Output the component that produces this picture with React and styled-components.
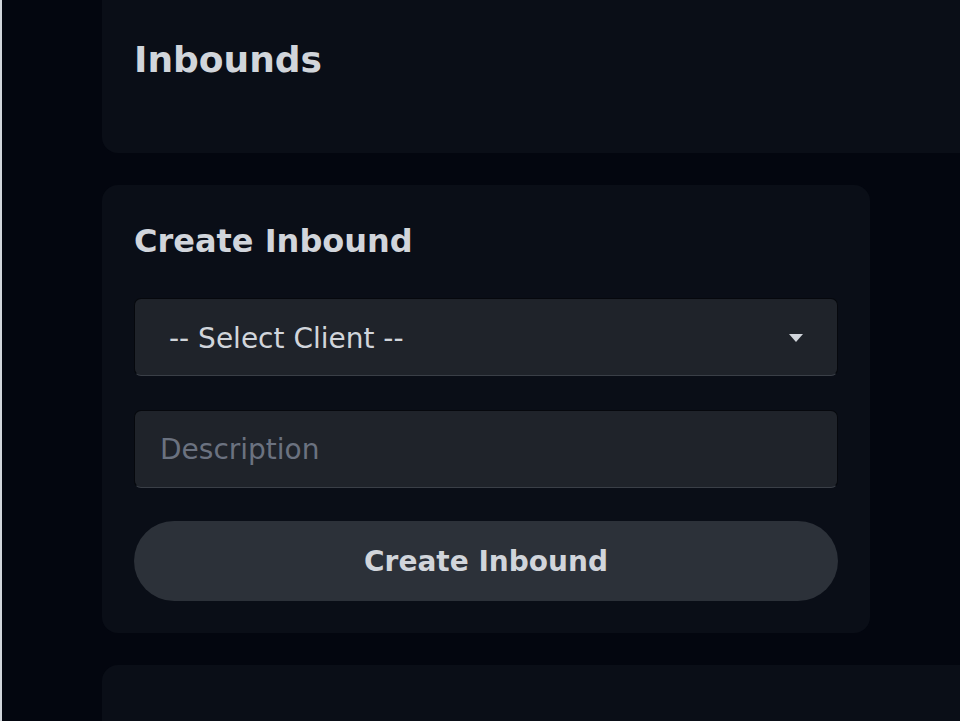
import React from 'react';
import styled, { createGlobalStyle } from 'styled-components';

const GlobalStyle = createGlobalStyle`
  html, body {
    margin: 0;
    padding: 0;
    background: #03060f;
  }
  body {
    font-family: "DejaVu Sans", "Liberation Sans", sans-serif;
    color: #d1d5db;
  }
`;

const Shell = styled.div`
  display: flex;
  height: 721px;
  overflow: hidden;
  background: #03060f;
`;

const Rail = styled.div`
  flex: 0 0 2px;
  background: #d1d5db;
`;

const Main = styled.main`
  flex: 1;
  min-width: 0;
  display: flex;
  flex-direction: column;
  gap: 32px;
  padding-left: 100px;
  margin-top: -32px;
`;

const Card = styled.section`
  box-sizing: border-box;
  background: #0a0e17;
  border-radius: 16px;
  padding: 32px;
  flex-shrink: 0;
  width: ${(p) => (p.wide ? '1100px' : '768px')};
`;

const HeaderCard = styled(Card)`
  display: flex;
  align-items: center;
  height: 185px;
`;

const PageTitle = styled.h1`
  margin: 0;
  font-size: 36px;
  line-height: 1.5;
  font-weight: 700;
  color: #d1d5db;
  transform: translateY(-1px);
`;

const CardTitle = styled.h2`
  margin: 0;
  font-size: 32px;
  line-height: 1.5;
  font-weight: 700;
  color: #d1d5db;
`;

const Form = styled.form`
  display: flex;
  flex-direction: column;
  gap: 33px;
`;

const SelectWrap = styled.div`
  position: relative;
`;

const fieldBase = `
  box-sizing: border-box;
  width: 100%;
  height: 78px;
  margin: 0;
  background: #1f232a;
  border: 1px solid #06080d;
  border-bottom-color: #3a3f47;
  border-radius: 7px;
  font-family: "DejaVu Sans", "Liberation Sans", sans-serif;
  font-size: 28px;
  color: #d1d5db;
  outline: none;
`;

const Select = styled.select`
  ${fieldBase}
  appearance: none;
  -webkit-appearance: none;
  padding: 2px 60px 0 34px;
`;

const Arrow = styled.svg`
  position: absolute;
  right: 35px;
  top: 36px;
  pointer-events: none;
`;

const Input = styled.input`
  ${fieldBase}
  padding: 0 25px;
  margin-top: 1px;

  &::placeholder {
    color: #6b7280;
  }
`;

const Button = styled.button`
  box-sizing: border-box;
  width: 100%;
  height: 80px;
  border: none;
  border-radius: 40px;
  background: #2c3139;
  color: #d1d5db;
  font-family: "DejaVu Sans", "Liberation Sans", sans-serif;
  font-size: 28px;
  font-weight: 700;
  cursor: pointer;
`;

export default function App() {
  return (
    <>
      <GlobalStyle />
      <Shell>
        <Rail />
        <Main>
          <HeaderCard wide>
            <PageTitle>Inbounds</PageTitle>
          </HeaderCard>

          <Card>
            <Form onSubmit={(e) => e.preventDefault()}>
              <CardTitle>Create Inbound</CardTitle>
              <SelectWrap>
                <Select defaultValue="">
                  <option value="">-- Select Client --</option>
                </Select>
                <Arrow width="14" height="8" viewBox="0 0 14 8">
                  <path d="M0 0 H14 L7 8 Z" fill="#d1d5db" />
                </Arrow>
              </SelectWrap>
              <Input placeholder="Description" />
              <Button type="submit">Create Inbound</Button>
            </Form>
          </Card>

          <Card wide style={{ height: 200 }} />
        </Main>
      </Shell>
    </>
  );
}
